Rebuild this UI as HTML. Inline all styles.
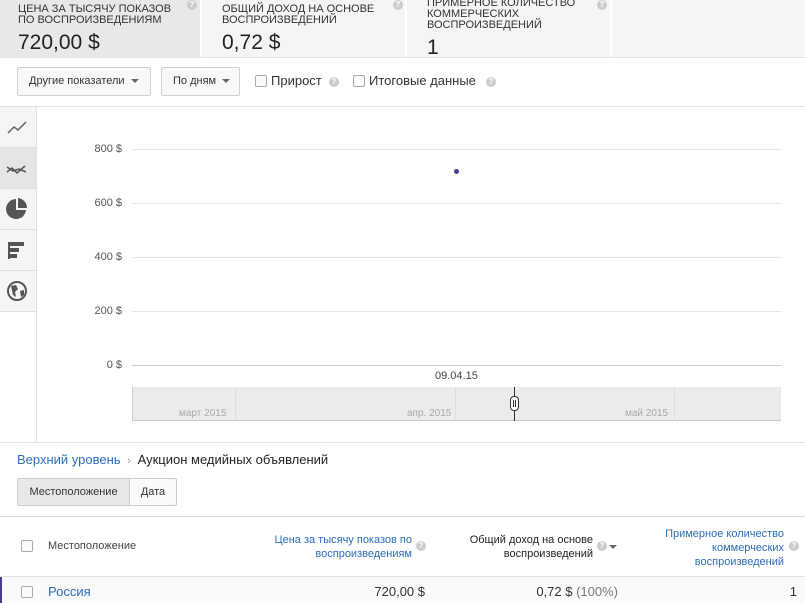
<!DOCTYPE html>
<html><head><meta charset="utf-8"><style>
*{box-sizing:border-box;margin:0;padding:0}
body{width:805px;height:603px;overflow:hidden;background:#fff;font-family:"Liberation Sans","DejaVu Sans",sans-serif;color:#333;position:relative;font-size:12px}
.a{position:absolute}
.tile{position:absolute;top:0;height:57px;background:#f5f5f5;border-right:2px solid #fff}
.tile .t{position:absolute;left:18px;font-size:11px;line-height:11px;color:#333;text-transform:uppercase}
.tile .v{position:absolute;left:18px;font-size:21px;color:#222}
.q{display:inline-block;width:10px;height:10px;border-radius:50%;background:#ccc;color:#fff;font-size:8px;line-height:10px;text-align:center;font-weight:bold}
.btn{position:absolute;top:67px;height:29px;border:1px solid #d0d0d0;background:#f8f8f8;border-radius:2px;font-size:11px;line-height:27px;padding-left:11px;color:#333}
.caret{display:inline-block;border-left:4px solid transparent;border-right:4px solid transparent;border-top:4px solid #666;vertical-align:middle;margin-left:6px}
.cb{position:absolute;width:12px;height:12px;border:1px solid #aaa;border-radius:2px;background:#fafafa}
.side{position:absolute;left:0;width:36px;height:41px;border-bottom:1px solid #e0e0e0;background:#f5f5f5}
.grid{position:absolute;left:132px;width:649px;height:1px;background:#e5e5e5}
.yl{position:absolute;left:60px;width:62px;text-align:right;font-size:11px;color:#555}
</style></head><body>
<div class="tile" style="left:0;width:202px;background:#e8e8e8"><div class="t" style="top:4px">Цена за тысячу показов<br>по воспроизведениям</div><div class="v" style="top:31px">720,00 $</div><span class="q a" style="left:187px;top:0">?</span></div>
<div class="tile" style="left:202px;width:205px"><div class="t" style="top:4px;left:20px">Общий доход на основе<br>воспроизведений</div><div class="v" style="top:31px;left:20px">0,72 $</div><span class="q a" style="left:191px;top:0">?</span></div>
<div class="tile" style="left:407px;width:205px"><div class="t" style="top:-2px;left:20px">Примерное количество<br>коммерческих<br>воспроизведений</div><div class="v" style="top:36px;left:20px">1</div><span class="q a" style="left:190px;top:0">?</span></div>
<div class="tile" style="left:612px;width:193px;border:none;background:#f5f5f5"></div>
<div class="a" style="left:0;top:57px;width:805px;height:1px;background:#e5e5e5"></div>

<div class="btn" style="left:17px;width:134px">Другие показатели<span class="caret"></span></div>
<div class="btn" style="left:161px;width:79px">По дням<span class="caret"></span></div>
<div class="cb" style="left:255px;top:75px"></div><div class="a" style="left:271px;top:73px;font-size:13px">Прирост</div><span class="q a" style="left:329px;top:77px">?</span>
<div class="cb" style="left:353px;top:75px"></div><div class="a" style="left:369px;top:73px;font-size:13px">Итоговые данные</div><span class="q a" style="left:486px;top:77px">?</span>
<div class="a" style="left:0;top:106px;width:805px;height:1px;background:#e0e0e0"></div>

<div class="a" style="left:36px;top:107px;width:1px;height:335px;background:#e0e0e0"></div>
<div class="side" style="top:107px"><svg width="36" height="41"><polyline points="8,26 14,20 18,23 26,15" fill="none" stroke="#666" stroke-width="1.5"/></svg></div>
<div class="side" style="top:148px;background:#e5e5e5"><svg width="36" height="41"><polyline points="7,24 12,20 17,25 25,18" fill="none" stroke="#555" stroke-width="1.5"/><polyline points="7,19 13,23 19,21 26,24" fill="none" stroke="#555" stroke-width="1.5"/></svg></div>
<div class="side" style="top:189px"><svg width="36" height="41"><path d="M16 10 A10 10 0 1 0 26 21 L16 21 Z" fill="#555"/><path d="M18 9 A10 10 0 0 1 27 19 L18 19 Z" fill="#555"/><path d="M17 23 L25 23 A10 10 0 0 1 21 29 Z" fill="#555"/></svg></div>
<div class="side" style="top:230px"><svg width="36" height="41"><rect x="8" y="12" width="2" height="17" fill="#555"/><rect x="10" y="12" width="14" height="4" fill="#555"/><rect x="10" y="18" width="9" height="4" fill="#555"/><rect x="10" y="24" width="7" height="4" fill="#555"/></svg></div>
<div class="side" style="top:271px"><svg width="36" height="41"><circle cx="17" cy="20" r="9" fill="none" stroke="#555" stroke-width="2"/><path d="M11 15 L16 14 L18 18 L15 21 L16 26 L13 24 Z M20 20 L24 19 L24 24 L21 26 Z" fill="#555"/></svg></div>

<div class="grid" style="top:149px"></div><div class="yl" style="top:143px">800 $</div>
<div class="grid" style="top:203px"></div><div class="yl" style="top:197px">600 $</div>
<div class="grid" style="top:257px"></div><div class="yl" style="top:251px">400 $</div>
<div class="grid" style="top:311px"></div><div class="yl" style="top:305px">200 $</div>
<div class="grid" style="top:365px;background:#ccc"></div><div class="yl" style="top:359px">0 $</div>
<div class="a" style="left:454px;top:169px;width:5px;height:5px;border-radius:50%;background:#4a3d8f"></div>
<div class="a" style="left:435px;top:370px;font-size:11px;color:#444">09.04.15</div>
<div class="a" style="left:132px;top:387px;width:649px;height:34px;background:#ebebeb;border-left:1px solid #ccc;border-bottom:1px solid #ccc"></div>
<div class="a" style="left:235px;top:387px;width:1px;height:34px;background:#ddd"></div>
<div class="a" style="left:455px;top:387px;width:1px;height:34px;background:#ddd"></div>
<div class="a" style="left:674px;top:387px;width:1px;height:34px;background:#ddd"></div>
<div class="a" style="left:179px;top:408px;font-size:10px;color:#aaa">март 2015</div>
<div class="a" style="left:407px;top:408px;font-size:10px;color:#aaa">апр. 2015</div>
<div class="a" style="left:625px;top:408px;font-size:10px;color:#aaa">май 2015</div>
<div class="a" style="left:514px;top:387px;width:1px;height:34px;background:#333"></div>
<div class="a" style="left:510px;top:396px;width:9px;height:15px;border:1px solid #333;border-radius:4px;background:#fff"></div>
<div class="a" style="left:513px;top:400px;width:1px;height:7px;background:#333"></div><div class="a" style="left:515px;top:400px;width:1px;height:7px;background:#333"></div>
<div class="a" style="left:0;top:442px;width:805px;height:1px;background:#e0e0e0"></div>

<div class="a" style="left:17px;top:452px;font-size:13px"><span style="color:#2a6ebb">Верхний уровень</span> <span style="color:#999;font-size:11px">&nbsp;›&nbsp;</span> <span style="color:#222">Аукцион медийных объявлений</span></div>
<div class="a" style="left:17px;top:478px;width:160px;height:28px;border:1px solid #ccc;border-radius:2px;background:#fafafa"></div>
<div class="a" style="left:18px;top:479px;width:112px;height:26px;background:#e8e8e8;border-right:1px solid #ccc;font-size:11px;line-height:26px;text-align:center">Местоположение</div>
<div class="a" style="left:130px;top:479px;width:46px;height:26px;font-size:11px;line-height:26px;text-align:center">Дата</div>
<div class="a" style="left:0;top:516px;width:805px;height:1px;background:#e0e0e0"></div>

<div class="cb" style="left:21px;top:540px"></div>
<div class="a" style="left:48px;top:540px;font-size:11px;color:#444">Местоположение</div>
<div class="a" style="left:230px;top:533px;width:182px;text-align:right;font-size:11px;line-height:14px;color:#2a6ebb">Цена за тысячу показов по<br>воспроизведениям</div><span class="q a" style="left:416px;top:541px">?</span>
<div class="a" style="left:440px;top:533px;width:153px;text-align:right;font-size:11px;line-height:14px;color:#222">Общий доход на основе<br>воспроизведений</div><span class="q a" style="left:597px;top:541px">?</span><span class="caret a" style="left:609px;top:545px;margin:0"></span>
<div class="a" style="left:620px;top:527px;width:164px;text-align:right;font-size:11px;line-height:14px;color:#2a6ebb">Примерное количество<br>коммерческих<br>воспроизведений</div><span class="q a" style="left:789px;top:541px">?</span>
<div class="a" style="left:0;top:576px;width:805px;height:1px;background:#e0e0e0"></div>
<div class="a" style="left:0;top:577px;width:805px;height:26px;background:#fafafa"></div>
<div class="a" style="left:0;top:577px;width:2px;height:26px;background:#4a3d8f"></div>
<div class="cb" style="left:21px;top:586px"></div>
<div class="a" style="left:48px;top:584px;font-size:13px;color:#2a6ebb">Россия</div>
<div class="a" style="left:330px;top:584px;width:95px;text-align:right;font-size:13px;color:#333">720,00 $</div>
<div class="a" style="left:480px;top:584px;width:138px;text-align:right;font-size:13px;color:#333">0,72 $ <span style="color:#777">(100%)</span></div>
<div class="a" style="left:760px;top:584px;width:37px;text-align:right;font-size:13px;color:#333">1</div>
</body></html>
